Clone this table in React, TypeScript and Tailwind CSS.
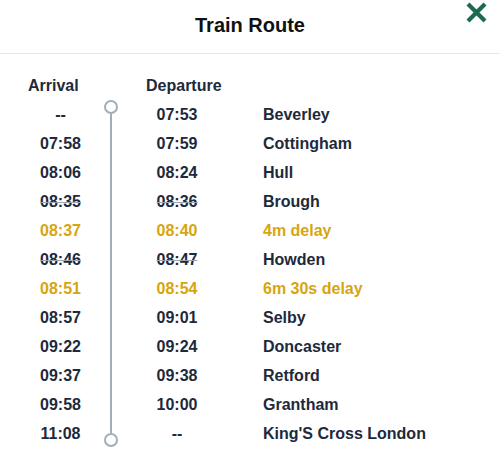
const stops = [
  { arr: '--', dep: '07:53', name: 'Beverley' },
  { arr: '07:58', dep: '07:59', name: 'Cottingham' },
  { arr: '08:06', dep: '08:24', name: 'Hull' },
  { arr: '08:35', dep: '08:36', name: 'Brough', struck: true },
  { arr: '08:37', dep: '08:40', name: '4m delay', delay: true },
  { arr: '08:46', dep: '08:47', name: 'Howden', struck: true },
  { arr: '08:51', dep: '08:54', name: '6m 30s delay', delay: true },
  { arr: '08:57', dep: '09:01', name: 'Selby' },
  { arr: '09:22', dep: '09:24', name: 'Doncaster' },
  { arr: '09:37', dep: '09:38', name: 'Retford' },
  { arr: '09:58', dep: '10:00', name: 'Grantham' },
  { arr: '11:08', dep: '--', name: "King'S Cross London" },
];

const CloseIcon = () => (
  <svg width="23" height="21" viewBox="0 0 23 21" fill="none">
    <path d="M3 2L20 19M20 2L3 19" stroke="#1b6a51" strokeWidth="4.2" />
  </svg>
);

export default function App() {
  return (
    <div className="w-[500px] h-[456px] bg-white overflow-hidden font-['Liberation_Sans',Arial,sans-serif] text-[#1e293b]">
      <div className="relative h-[54px] border-b border-[#e2e8f0] flex items-center justify-center">
        <h1 className="text-[20px] font-bold text-[#111111] -mt-[4px]">Train Route</h1>
        <button className="absolute right-[12px] top-[2px]">
          <CloseIcon />
        </button>
      </div>

      <div className="pl-[28px] pt-[17px] grid grid-cols-[65px_53px_62px_1fr] text-[16px] font-bold leading-[29px]">
        <div className="whitespace-nowrap">Arrival</div>
        <div />
        <div className="whitespace-nowrap">Departure</div>
        <div />

        <div className="col-start-2 row-start-2 row-span-12 flex flex-col items-start pl-[11px] pt-[-1px] pb-[1px]">
          <div className="w-[14px] h-[14px] rounded-full border-2 border-[#a3adba] bg-white" />
          <div className="ml-[6px] w-[2px] flex-1 bg-[#a3adba]" />
          <div className="w-[14px] h-[14px] rounded-full border-2 border-[#a3adba] bg-white" />
        </div>

        {stops.map((s, i) => {
          const tone = s.delay ? 'text-[#d7a50d]' : '';
          const strike = s.struck ? 'line-through decoration-[#9aa3ae] decoration-1' : '';
          return [
            <div key={`a${i}`} className={`col-start-1 text-center ${tone} ${strike}`} style={{ gridRow: i + 2 }}>
              {s.arr}
            </div>,
            <div key={`d${i}`} className={`col-start-3 text-center ${tone} ${strike}`} style={{ gridRow: i + 2 }}>
              {s.dep}
            </div>,
            <div key={`n${i}`} className={`col-start-4 pl-[55px] whitespace-nowrap ${tone}`} style={{ gridRow: i + 2 }}>
              {s.name}
            </div>,
          ];
        })}
      </div>
    </div>
  );
}
